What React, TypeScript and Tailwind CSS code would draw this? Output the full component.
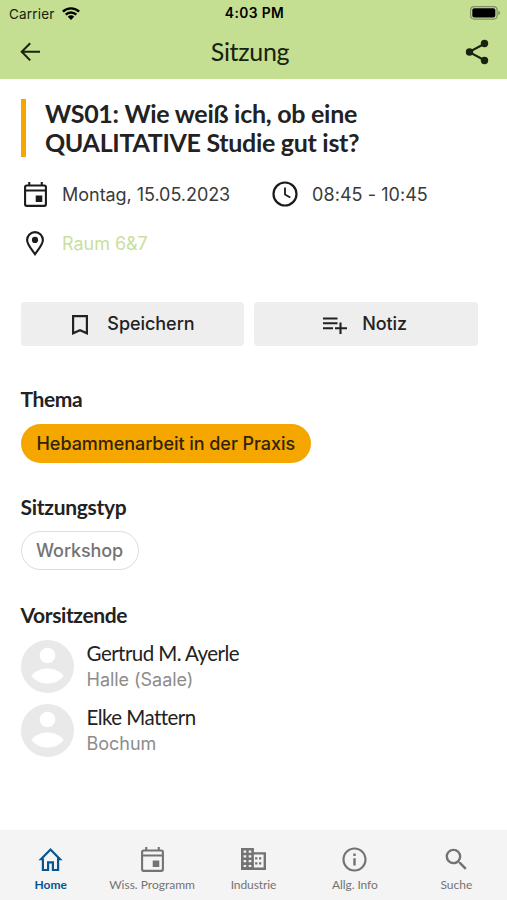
import type { ReactNode } from "react";

type IconProps = { className?: string };

function Icon({
  className,
  children,
}: {
  className?: string;
  children: ReactNode;
}) {
  return (
    <svg viewBox="0 0 24 24" fill="currentColor" className={className}>
      {children}
    </svg>
  );
}

function CalendarIcon({ className }: IconProps) {
  return (
    <Icon className={className}>
      <path d="M5 0h2v2.3h10V0h2v2.3h1.500a2.500 2.500 0 0 1 2.500 2.500v16.600a2.500 2.500 0 0 1-2.500 2.500h-17A2.500 2.500 0 0 1 1 21.400V4.800a2.500 2.500 0 0 1 2.500-2.500H5zM3 9v12.200q0 .7.700.7h16.600q.7 0 .7-.7V9zM3 5v2.100h18V5q0-.7-.7-.7H3.700Q3 4.300 3 5zM12.200 13h6.300v6.300h-6.300z" />
    </Icon>
  );
}

function TabIcon({ name }: { name: string }) {
  if (name === "Home") {
    return (
      <Icon className="size-[25px]">
        <path
          d="M4.700 11.700H2.900L12 2.500l9.100 9.200h-1.800v10.400h-5v-7.400H9.700v7.400h-5V11"
          fill="none"
          stroke="currentColor"
          strokeWidth="2.100"
        />
      </Icon>
    );
  }
  if (name === "Wiss. Programm") {
    return <CalendarIcon className="size-[25px]" />;
  }
  if (name === "Industrie") {
    return (
      <svg viewBox="0 0 25 22" className="h-[22px] w-[25px]">
        <path
          fill="currentColor"
          fillRule="evenodd"
          d="M0 0h12.900v4.200H25V22H0zM2.600 2.500v2.200h2.600V2.500zM7.700 2.500v2.200h2.600V2.500zM2.600 7.200v2.200h2.600V7.200zM7.700 7.200v2.200h2.600V7.200zM2.600 12v2.200h2.600V12zM7.700 12v2.200h2.600V12zM2.600 16.900v2.200h2.600v-2.200zM7.700 16.900v2.200h2.600v-2.200zM12.900 6.500v13.100h9.700V6.500zM14.100 9.200h2.300v2.300h-2.300zM18 9.200h2.300v2.300H18zM14.100 14.200h2.300v2.300h-2.300zM18 14.200h2.300v2.300H18z"
        />
      </svg>
    );
  }
  if (name === "Allg. Info") {
    return (
      <Icon className="size-[29px]">
        <path d="M11 7h2v2h-2zm0 4h2v6h-2zm1-9C6.480 2 2 6.480 2 12s4.480 10 10 10 10-4.480 10-10S17.520 2 12 2zm0 18.200c-4.530 0-8.200-3.670-8.200-8.200S7.470 3.800 12 3.800s8.200 3.670 8.200 8.200-3.670 8.200-8.200 8.200z" />
      </Icon>
    );
  }
  return (
    <Icon className="size-[29px]">
      <path d="M15.500 14h-.79l-.28-.27A6.471 6.471 0 0 0 16 9.500 6.500 6.500 0 1 0 9.500 16c1.610 0 3.090-.59 4.230-1.570l.27.280v.79l5 4.990L20.490 19l-4.990-5zm-6 0C7.010 14 5 11.990 5 9.500S7.010 5 9.500 5 14 7.010 14 9.500 11.990 14 9.500 14z" />
    </Icon>
  );
}

const tabs = [
  { label: "Home", className: "text-[#075591] font-bold" },
  { label: "Wiss. Programm", className: "text-[#737373]" },
  { label: "Industrie", className: "text-[#737373] tracking-[-0.1px]" },
  { label: "Allg. Info", className: "text-[#737373] tracking-[-0.1px]" },
  { label: "Suche", className: "text-[#737373]" },
];

const chairs = [
  { name: "Gertrud M. Ayerle", place: "Halle (Saale)" },
  { name: "Elke Mattern", place: "Bochum" },
];

function StatusBar() {
  return (
    <div className="grid h-7 grid-cols-3 items-center pl-[9px] pr-[7px] text-[13.5px] text-[#14230e]">
      <div className="flex items-center gap-[7px]">
        <span className="tracking-[0.2px]">Carrier</span>
        <svg viewBox="0 0 18 13" className="mb-[2px] h-[13px] w-[18px]">
          <g fill="none" stroke="#000" strokeWidth="2.400">
            <path d="M.9 4.700a11.500 11.500 0 0 1 16.200 0" />
            <path d="M3.700 7.700a7.500 7.500 0 0 1 10.600 0" />
          </g>
          <path d="M9 13 5.800 9.700a4.500 4.500 0 0 1 6.400 0z" />
        </svg>
      </div>
      <span className="mb-px whitespace-nowrap text-center text-[13.8px] font-semibold tracking-[0.4px] text-black">
        4:03 PM
      </span>
      <svg viewBox="0 0 30 14" className="mb-[2px] h-[14px] w-[30px] justify-self-end">
        <rect x=".6" y=".6" width="26.500" height="12.500" rx="3.500" fill="none" stroke="#809064" strokeWidth="1.200" />
        <rect x="2.300" y="2.300" width="23" height="9.200" rx="2" />
        <path d="M28.300 4.800q1.700.4 1.700 2.100t-1.700 2.100z" fill="#809064" />
      </svg>
    </div>
  );
}

function App() {
  return (
    <div className="flex h-[900px] w-[507px] flex-col bg-white font-['Inter',sans-serif] text-[#222]">
      <header className="h-[79px] shrink-0 bg-[#c4de92]">
        <StatusBar />
        <div className="flex h-[48px] items-center justify-between pl-[20px] pr-[18px] text-[#17230f]">
          <svg viewBox="0 0 20 20" className="size-5">
            <path
              d="M10.200 1.200 1.700 9.800l8.500 8.600M2 9.800h18"
              fill="none"
              stroke="currentColor"
              strokeWidth="2"
            />
          </svg>
          <h1 className="mr-[5px] font-['Lato',sans-serif] text-[25px] tracking-[-0.3px]">
            Sitzung
          </h1>
          <svg viewBox="0 0 24 26" className="h-[26px] w-6">
            <path d="M20 4.500 4 13l16 8.500" fill="none" stroke="currentColor" strokeWidth="2" />
            <g fill="currentColor">
              <circle cx="19.500" cy="4.500" r="3.700" />
              <circle cx="4.500" cy="13" r="3.700" />
              <circle cx="19.500" cy="21.500" r="3.700" />
            </g>
          </svg>
        </div>
      </header>

      <main className="flex-1 pl-[20.6px] pr-[29px] pt-5">
        <h2 className="h-[58px] border-l-[5px] border-[#f5a700] pl-[19.3px] font-['Lato',sans-serif] text-[25px] font-bold leading-[29px] tracking-[-0.27px] whitespace-nowrap">
          WS01: Wie weiß ich, ob eine
          <br />
          <span className="tracking-[-0.3px]">QUALITATIVE Studie gut ist?</span>
        </h2>

        <div className="mt-[25px] flex h-6 items-center text-[18px] tracking-[-0.05px] text-[#3a3a3a]">
          <CalendarIcon className="mx-[2px] size-[25px] text-[#1b1b1b]" />
          <span className="ml-[12.5px] w-[210px]">Montag, 15.05.2023</span>
          <svg viewBox="0 0 26 26" className="size-[26px] text-[#1b1b1b]">
            <g fill="none" stroke="currentColor" strokeWidth="2.200">
              <circle cx="13" cy="13" r="11.500" />
              <path d="M13 6.500v7l5.300 3" strokeWidth="1.800" />
            </g>
          </svg>
          <span className="ml-[14px] tracking-[0.05px]">08:45 - 10:45</span>
        </div>

        <div className="mt-[25px] flex h-6 items-center text-[18px] tracking-[-0.05px] text-[#c9e09d]">
          <svg viewBox="0 0 18 25" className="mx-[5.500px] h-[25px] w-[18px] text-[#1b1b1b]">
            <path
              d="M9 23.200C6.500 19.500 1.100 13.700 1.100 9a7.900 7.900 0 0 1 15.800 0c0 4.700-5.400 10.500-7.900 14.200z"
              fill="none"
              stroke="currentColor"
              strokeWidth="2.100"
            />
            <circle cx="9" cy="8.900" r="3.100" fill="currentColor" />
          </svg>
          <span className="ml-[12.5px]">Raum 6&amp;7</span>
        </div>

        <div className="mt-[47px] grid grid-cols-2 gap-[10px] text-[18px] font-medium tracking-[-0.05px]">
          <button className="flex h-[44px] items-center justify-center rounded-[4px] bg-[#eee]">
            <svg viewBox="0 0 16 20" className="mr-[19px] mt-[2px] h-5 w-4">
              <path d="M1.100 1.100h13.800v17.200L8 15.300l-6.900 3z" fill="none" stroke="currentColor" strokeWidth="2.200" />
            </svg>
            <span className="mr-[-2px] mb-px">Speichern</span>
          </button>
          <button className="flex h-[44px] items-center justify-center rounded-[4px] bg-[#eee]">
            <svg viewBox="0 0 24 17" className="mr-[15px] mt-[3px] h-[17px] w-6">
              <path
                d="M0 1.500h14.500M0 6.300h14.500M0 11.200h10M17.500 5.500V17M12 11.200h12"
                fill="none"
                stroke="currentColor"
                strokeWidth="2.100"
              />
            </svg>
            <span className="mr-[2px] mb-px">Notiz</span>
          </button>
        </div>

        <section className="mt-[39px]">
          <h3 className="h-7 font-['Lato',sans-serif] text-[21px] font-bold leading-7 tracking-[-0.4px]">
            Thema
          </h3>
          <span className="mt-[11px] flex h-[39px] w-[290.500px] items-center justify-center rounded-full bg-[#f5a700] text-[18px] font-medium tracking-[-0.05px] whitespace-nowrap text-[#30240c]">
            Hebammenarbeit in der Praxis
          </span>
        </section>

        <section className="mt-[30px]">
          <h3 className="h-7 font-['Lato',sans-serif] text-[21px] font-bold leading-7 tracking-[-0.3px]">
            Sitzungstyp
          </h3>
          <span className="mt-[10px] flex h-[39px] w-[118px] items-center justify-center rounded-full border border-[#ddd] text-[18px] font-medium tracking-[-0.1px] text-[#737373]">
            Workshop
          </span>
        </section>

        <section className="mt-[31px]">
          <h3 className="h-7 font-['Lato',sans-serif] text-[21px] font-bold leading-7 tracking-[-0.4px]">
            Vorsitzende
          </h3>
          <ul className="mt-[11px] space-y-[11px]">
            {chairs.map((chair) => (
              <li key={chair.name} className="flex h-[53px] items-center">
                <svg viewBox="0 0 53 53" className="size-[53px]">
                  <circle cx="26.500" cy="26.500" r="26.500" fill="#e9e9e9" />
                  <circle cx="26.500" cy="15.500" r="7.800" fill="#fff" />
                  <path d="M10.500 36c3-5 10-7.500 16-7.500s13 2.500 16 7.500c-4 5-9.500 7.500-16 7.500s-12-2.500-16-7.500z" fill="#fff" />
                </svg>
                <div className="mb-px ml-[13px]">
                  <p className="font-['Lato',sans-serif] text-[20.5px] leading-[26px] tracking-[-0.55px]">
                    {chair.name}
                  </p>
                  <p className="text-[18px] leading-[27px] tracking-[-0.05px] text-[#8c8c8c]">
                    {chair.place}
                  </p>
                </div>
              </li>
            ))}
          </ul>
        </section>
      </main>

      <nav className="grid h-[70px] shrink-0 grid-cols-5 bg-[#f4f4f4]">
        {tabs.map((tab) => (
          <div
            key={tab.label}
            className={`flex flex-col items-center pt-[15px] font-['Lato',sans-serif] text-[12px] whitespace-nowrap ${tab.className}`}>
            <div className="flex h-7 items-center">
              <TabIcon name={tab.label} />
            </div>
            <span className="mt-[3px] leading-[18px]">{tab.label}</span>
          </div>
        ))}
      </nav>
    </div>
  );
}

export default App;
